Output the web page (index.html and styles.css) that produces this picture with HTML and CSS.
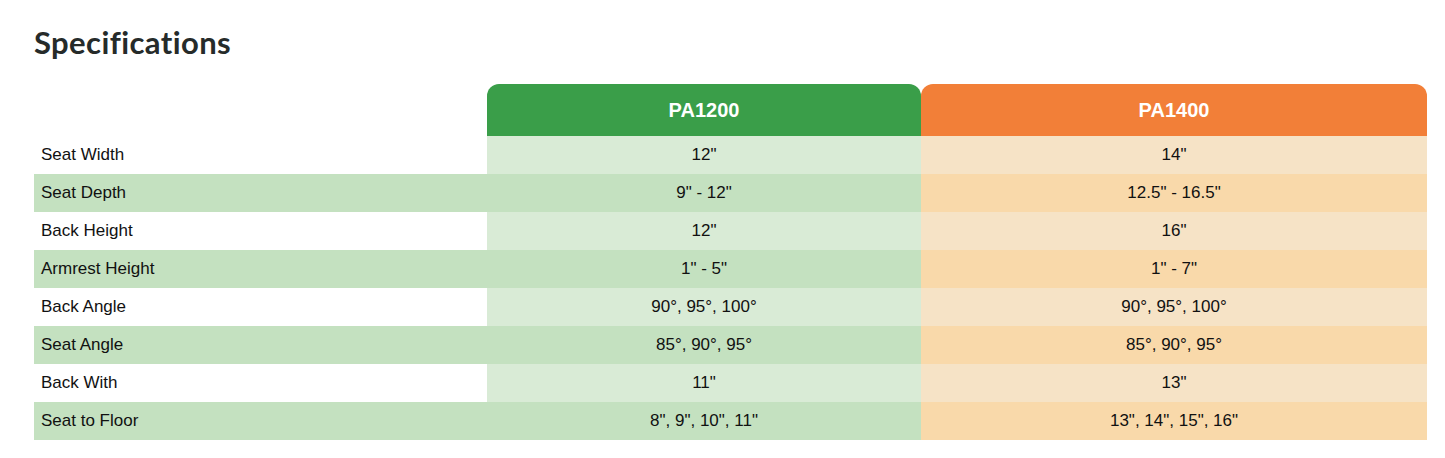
FILE: index.html
```html
<!DOCTYPE html>
<html>
<head>
<meta charset="utf-8">
<link rel="stylesheet" href="styles.css">
</head>
<body>
<section class="specs">
  <h2 class="title">Specifications</h2>
  <table class="spec-table">
    <colgroup>
      <col class="c-label">
      <col class="c-a">
      <col class="c-b">
    </colgroup>
    <thead>
      <tr>
        <th class="blank"></th>
        <th class="head head-green">PA1200</th>
        <th class="head head-orange">PA1400</th>
      </tr>
    </thead>
    <tbody>
      <tr class="odd"><td class="label">Seat Width</td><td class="va">12"</td><td class="vb">14"</td></tr>
      <tr class="even"><td class="label">Seat Depth</td><td class="va">9" - 12"</td><td class="vb">12.5" - 16.5"</td></tr>
      <tr class="odd"><td class="label">Back Height</td><td class="va">12"</td><td class="vb">16"</td></tr>
      <tr class="even"><td class="label">Armrest Height</td><td class="va">1" - 5"</td><td class="vb">1" - 7"</td></tr>
      <tr class="odd"><td class="label">Back Angle</td><td class="va">90°, 95°, 100°</td><td class="vb">90°, 95°, 100°</td></tr>
      <tr class="even"><td class="label">Seat Angle</td><td class="va">85°, 90°, 95°</td><td class="vb">85°, 90°, 95°</td></tr>
      <tr class="odd"><td class="label">Back With</td><td class="va">11"</td><td class="vb">13"</td></tr>
      <tr class="even"><td class="label">Seat to Floor</td><td class="va">8", 9", 10", 11"</td><td class="vb">13", 14", 15", 16"</td></tr>
    </tbody>
  </table>
</section>
</body>
</html>
```

FILE: styles.css
```css
html, body {
  margin: 0;
  padding: 0;
  background: #ffffff;
}
.specs {
  padding: 24px 18px 0 34px;
}
.title {
  margin: 0 0 24px 0;
  font-family: "Lato", "Noto Sans", sans-serif;
  font-weight: 700;
  font-size: 31px;
  line-height: 36px;
  color: #262b2a;
  letter-spacing: 0.4px;
}
.spec-table {
  width: 1393px;
  border-collapse: collapse;
  border-spacing: 0;
  table-layout: fixed;
  font-family: "Liberation Sans", Arial, sans-serif;
  font-size: 17px;
  color: #111111;
}
.c-label { width: 453px; }
.c-a { width: 434px; }
.c-b { width: 506px; }
.spec-table th, .spec-table td {
  padding: 0;
}
.head {
  height: 52px;
  color: #ffffff;
  font-weight: 700;
  font-size: 20px;
  text-align: center;
  vertical-align: middle;
  border-radius: 12px 12px 0 0;
}
.head-green { background: #3a9e49; }
.head-orange { background: #f27f38; }
.spec-table td {
  height: 38px;
  vertical-align: middle;
}
.label {
  padding-left: 7px !important;
  text-align: left;
}
.va, .vb { text-align: center; }
.odd .label { background: #ffffff; }
.even .label { background: #c4e1c0; }
.odd .va { background: #d9ebd6; }
.even .va { background: #c4e1c0; }
.odd .vb { background: #f6e3c6; }
.even .vb { background: #f9d9aa; }
```
